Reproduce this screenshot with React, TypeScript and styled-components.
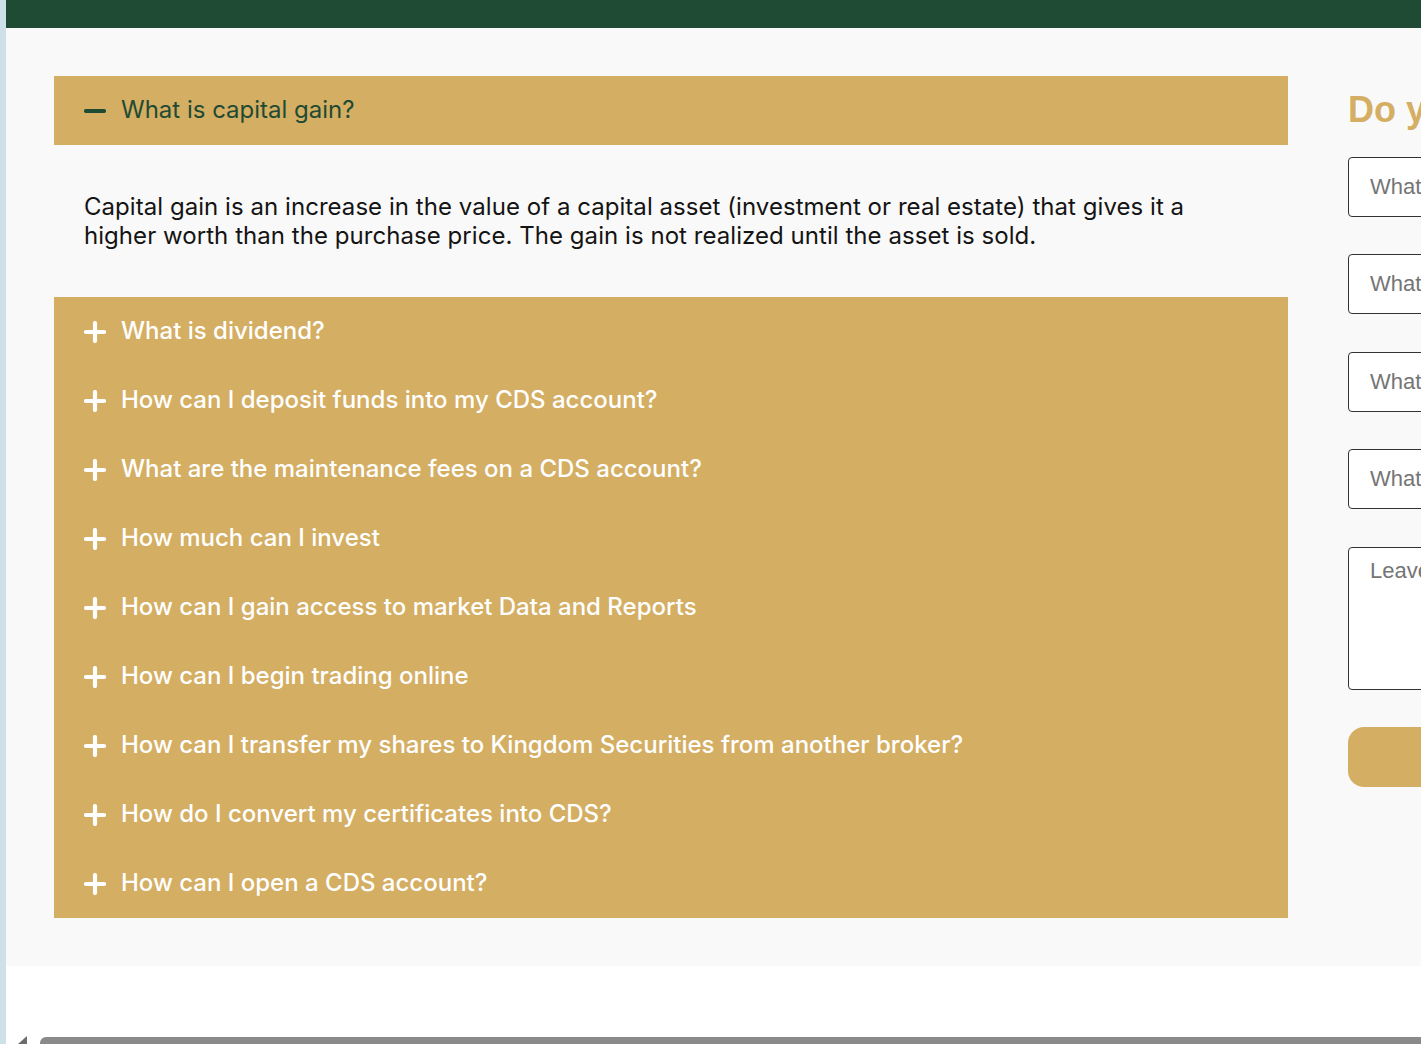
import React, { useState } from 'react';
import styled, { createGlobalStyle } from 'styled-components';

const GlobalStyle = createGlobalStyle`
  html, body {
    margin: 0;
    padding: 0;
    background: #ffffff;
    overflow: hidden;
  }
  * {
    box-sizing: border-box;
  }
`;

const faqs = [
  {
    q: 'What is capital gain?',
    a: 'Capital gain is an increase in the value of a capital asset (investment or real estate) that gives it a higher worth than the purchase price. The gain is not realized until the asset is sold.',
  },
  { q: 'What is dividend?', a: '' },
  { q: 'How can I deposit funds into my CDS account?', a: '' },
  { q: 'What are the maintenance fees on a CDS account?', a: '' },
  { q: 'How much can I invest', a: '' },
  { q: 'How can I gain access to market Data and Reports', a: '' },
  { q: 'How can I begin trading online', a: '' },
  { q: 'How can I transfer my shares to Kingdom Securities from another broker?', a: '' },
  { q: 'How do I convert my certificates into CDS?', a: '' },
  { q: 'How can I open a CDS account?', a: '' },
];

function Icon({ open }: { open: boolean }) {
  return (
    <svg width="22" height="22" viewBox="0 0 22 22">
      <line x1="2" y1="11" x2="20" y2="11" stroke="currentColor" strokeWidth="4.2" strokeLinecap="round" />
      {!open && (
        <line x1="11" y1="2" x2="11" y2="20" stroke="currentColor" strokeWidth="4.2" strokeLinecap="round" />
      )}
    </svg>
  );
}

export default function App() {
  const [openIndex, setOpenIndex] = useState(0);

  return (
    <>
      <GlobalStyle />
      <Page>
        <LeftStrip />
        <Main>
          <TopBar />
          <Section>
            <Accordion>
              {faqs.map((item, i) => {
                const open = i === openIndex;
                return (
                  <Item key={item.q}>
                    <Header $open={open} onClick={() => setOpenIndex(open ? -1 : i)}>
                      <Icon open={open} />
                      <Title>{item.q}</Title>
                    </Header>
                    {open && <Body>{item.a}</Body>}
                  </Item>
                );
              })}
            </Accordion>

            <Form>
              <Heading>Do you have a question?</Heading>
              <Field placeholder="What is your name?" />
              <Field placeholder="What is your email?" />
              <Field placeholder="What is your phone number?" />
              <Field placeholder="What is your subject?" />
              <Message placeholder="Leave a message" />
              <SubmitButton type="button">Submit</SubmitButton>
            </Form>
          </Section>
          <Spacer />
          <ScrollRow>
            <ScrollArrow />
            <ScrollThumb />
          </ScrollRow>
        </Main>
      </Page>
    </>
  );
}

const Page = styled.div`
  display: flex;
  width: 100vw;
  height: 1044px;
  overflow: hidden;
`;

const LeftStrip = styled.div`
  width: 6px;
  flex-shrink: 0;
  background: #cfe1e8;
`;

const Main = styled.div`
  flex: 1;
  min-width: 0;
  display: flex;
  flex-direction: column;
  overflow: hidden;
`;

const TopBar = styled.div`
  height: 28px;
  flex-shrink: 0;
  background: #1f4a33;
`;

const Section = styled.div`
  display: flex;
  gap: 60px;
  align-items: flex-start;
  padding: 48px 0 48px 48px;
  background: #f9f9f9;
`;

const Accordion = styled.div`
  width: 1234px;
  flex-shrink: 0;
  display: flex;
  flex-direction: column;
`;

const Item = styled.div`
  display: flex;
  flex-direction: column;
`;

const Header = styled.div<{ $open: boolean }>`
  height: 69px;
  display: flex;
  align-items: center;
  gap: 15px;
  padding: 0 30px;
  background: #d4ae63;
  color: ${(p) => (p.$open ? '#1f4a33' : '#ffffff')};
  font-family: Inter, 'Noto Sans', sans-serif;
  font-size: 24px;
  font-weight: ${(p) => (p.$open ? 400 : 500)};
  cursor: pointer;

  svg {
    flex-shrink: 0;
  }
`;

const Title = styled.span`
  margin-top: -2px;
`;

const Body = styled.p`
  margin: 0;
  padding: 47px 100px 47px 30px;
  font-family: Inter, 'Noto Sans', sans-serif;
  font-size: 24px;
  line-height: 29px;
  letter-spacing: 0.05px;
  color: #141414;
`;

const Form = styled.div`
  width: 420px;
  flex-shrink: 0;
  display: flex;
  flex-direction: column;
  gap: 37.5px;
  padding-top: 12px;
`;

const Heading = styled.h2`
  margin: 0 0 -13px;
  font-family: 'Liberation Sans', Arial, sans-serif;
  font-size: 36px;
  line-height: 44px;
  font-weight: 700;
  color: #d4ae63;
  white-space: nowrap;
`;

const Field = styled.input`
  height: 60px;
  width: 100%;
  padding: 0 21px;
  border: 1px solid #333333;
  border-radius: 4px;
  background: #ffffff;
  font-family: 'Liberation Sans', Arial, sans-serif;
  font-size: 22px;
  color: #333;

  &::placeholder {
    color: #757575;
  }
`;

const Message = styled.textarea`
  height: 143px;
  width: 100%;
  padding: 10px 21px;
  border: 1px solid #333333;
  border-radius: 4px;
  background: #ffffff;
  font-family: 'Liberation Sans', Arial, sans-serif;
  font-size: 22px;
  resize: none;

  &::placeholder {
    color: #757575;
  }
`;

const SubmitButton = styled.button`
  height: 60px;
  width: 100%;
  border: none;
  border-radius: 16px;
  background: #d4ae63;
  color: #ffffff;
  font-family: Inter, sans-serif;
  font-size: 22px;
  font-weight: 600;
`;

const Spacer = styled.div`
  height: 70px;
  flex-shrink: 0;
  background: #ffffff;
`;

const ScrollRow = styled.div`
  flex: 1;
  display: flex;
  align-items: flex-end;
  gap: 13px;
  padding-left: 12px;
  background: #ffffff;
`;

const ScrollArrow = styled.div`
  width: 0;
  height: 0;
  border-right: 9px solid #6c6c6c;
  border-top: 8px solid transparent;
`;

const ScrollThumb = styled.div`
  flex: 1;
  height: 7px;
  border-top-left-radius: 6px;
  background: #8a8a8a;
`;
